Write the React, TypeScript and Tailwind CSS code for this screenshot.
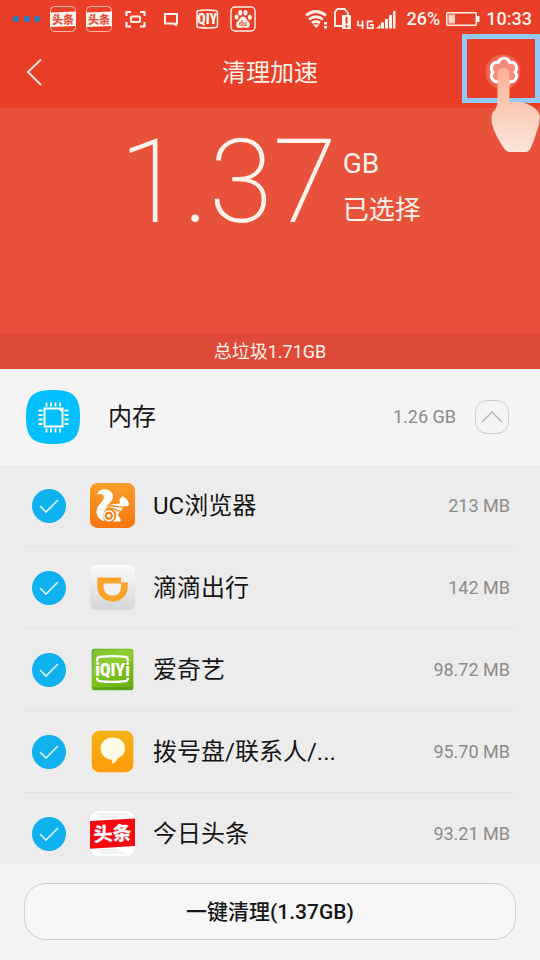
import { useState } from "react"
import type { ReactNode } from "react"

const FONT = "font-['Roboto','Noto_Sans_CJK_SC',sans-serif]"

function NewsBadge() {
  return (
    <svg className="w-[26px] h-[26px]" viewBox="0 0 26 26">
      <rect x="0.5" y="0.5" width="25" height="25" rx="4" fill="none" stroke="#ffb9a5" />
      <path d="M0 6.500l26-1v14.500l-26 1z" fill="#fff5ee" />
      <text x="13" y="17.500" textAnchor="middle" fontSize="11" fontWeight="900" fill="#e4503b">
        头条
      </text>
    </svg>
  )
}

function StatusBar() {
  return (
    <div className="flex h-[38px] items-center justify-between pl-3 pr-2 text-[#fff3ea]">
      <div className="flex items-center gap-2.5">
        <svg className="w-7 h-[26px]" viewBox="0 0 28 26" fill="#3a78b2">
          <rect x="1" y="10" width="6" height="6" rx="1.500" />
          <rect x="12" y="10" width="6" height="6" rx="1.500" />
          <rect x="22" y="10" width="6" height="6" rx="1.500" />
        </svg>
        <NewsBadge />
        <NewsBadge />
        <svg className="w-[26px] h-[26px]" viewBox="0 0 26 26" fill="none" stroke="currentColor" strokeWidth="2.200">
          <path d="M4.500 10V6H9M18 6h4.500v4M22.500 16v4.500H18M9 20.500H4.500V16" />
          <rect x="9" y="10.500" width="9" height="5.500" rx="1" />
        </svg>
        <svg className="w-[26px] h-[26px]" viewBox="0 0 26 26" fill="none" stroke="currentColor" strokeWidth="2">
          <path d="M7 8h12v9.500h-1V19l-3-1.500H7z" />
        </svg>
        <svg className="w-[26px] h-[26px]" viewBox="0 0 26 26">
          <path
            d="M3 8V6q0-1.500 2-1.500Q13 3.500 21 4.500q2.500 0 2.500 2V8M3 18v2q0 1.500 2 1.500 8 1 16 0 2.500 0 2.500-2V18M3 8v10M23.500 8v10"
            fill="none"
            stroke="currentColor"
            strokeWidth="1.500"
          />
          <text
            x="13.200"
            y="18"
            textAnchor="middle"
            fontSize="14"
            fontWeight="900"
            fill="currentColor"
            className="font-['Roboto_Condensed','Liberation_Sans_Narrow','Roboto',sans-serif]"
          >
            QIY
          </text>
        </svg>
        <svg className="w-[26px] h-[26px]" viewBox="0 0 26 26">
          <rect x="1" y="1" width="24" height="24" rx="4" fill="none" stroke="currentColor" strokeWidth="1.400" />
          <g fill="currentColor">
            <ellipse cx="6.500" cy="11" rx="2" ry="2.700" />
            <ellipse cx="10.300" cy="6.800" rx="2" ry="2.800" />
            <ellipse cx="15.500" cy="6.800" rx="2" ry="2.800" />
            <ellipse cx="19.800" cy="11.200" rx="2" ry="2.700" />
            <path d="M13 10.500c2.500 0 3.500 3 5.500 5 2.600 2.800 1.300 6.500-2 6.500-1.500 0-2-.4-3.500-.4s-2 .4-3.500.4c-3.300 0-4.600-3.700-2-6.500 2-2 3-5 5.500-5z" />
          </g>
          <text x="13" y="20" textAnchor="middle" fontSize="7" fontWeight="700" fill="#e4503b">
            du
          </text>
        </svg>
      </div>
      <div className="flex items-center gap-1.5 text-lg leading-6 font-medium">
        <svg className="mr-1 w-[92px] h-6" viewBox="0 0 92 24" fill="none" stroke="currentColor">
          <path d="M1 8.500q10-8 20 0M4 12.500q7-5.500 14 0M7 16q4-3 8 0" strokeWidth="2.800" />
          <path d="M8 17.500h6.500L11.200 21z" fill="currentColor" stroke="none" />
          <path d="M19 15h3v2.500h-3zM19 19h3v2.500h-3z" fill="currentColor" stroke="none" />
          <path d="M38 19h-8V5l2.500-3h7l3.500 4v2" strokeWidth="1.800" />
          <rect x="37" y="8" width="9" height="14" rx="1" fill="currentColor" stroke="none" />
          <path d="M41.500 10v6.500M41.500 18v2.500" stroke="#e83f29" strokeWidth="2" />
          <path d="M53 13.500v5h6M57.500 13.500v8.500M68 14.300h-5.500v6.900H68v-3.400h-3" strokeWidth="1.700" />
          <path
            d="M71 21.500l4.500-4v4zM76 15.500h3v6h-3zM80 12h3v9.500h-3zM84 8h3v13.500h-3zM88 4h2.500v17.500H88z"
            fill="currentColor"
            stroke="none"
          />
        </svg>
        <span>26%</span>
        <svg className="w-[34px] h-6" viewBox="0 0 34 24">
          <rect x="0.800" y="5.800" width="29.500" height="12.500" rx="1" fill="none" stroke="currentColor" strokeWidth="1.500" />
          <rect x="2.500" y="7.500" width="6.500" height="9" fill="#ffd5c6" />
          <rect x="31" y="9" width="2.500" height="6" fill="currentColor" />
        </svg>
        <span>10:33</span>
      </div>
    </div>
  )
}

function TapHint() {
  return (
    <div className="pointer-events-none absolute right-0 top-[34px] h-[69px] w-[78px] border-[5px] border-[#93c9f5]">
      <svg className="absolute -left-[5px] -top-[5px] h-[122px] w-[78px]" viewBox="0 0 78 122">
        <defs>
          <linearGradient id="hand" x1="0" y1="0" x2="0" y2="1">
            <stop offset="0" stopColor="#fbae92" />
            <stop offset="0.450" stopColor="#fbc9b4" />
            <stop offset="1" stopColor="#fce6dc" />
          </linearGradient>
        </defs>
        <circle cx="41" cy="38" r="17.500" fill="#fff" fillOpacity="0.200" />
        <circle cx="41" cy="38" r="13.500" fill="#fff" fillOpacity="0.250" />
        <path
          d="M35.500 40q0-6 6-6t6 6v28q13-1 22 4 7 4 8 10 1 6-3 16-2 8-5 14-2 6-6 6H48q-4 0-7-5-9-14-11-23-2-10 3-14 2-3 2.500-9z"
          fill="url(#hand)"
        />
      </svg>
    </div>
  )
}

function UcIcon() {
  return (
    <svg className="w-[45px] h-[45px]" viewBox="0 0 136 136">
      <defs>
        <linearGradient id="uc" x1="0" y1="0" x2="0" y2="1">
          <stop offset="0" stopColor="#fb9e2b" />
          <stop offset="1" stopColor="#f8760f" />
        </linearGradient>
      </defs>
      <rect width="136" height="136" rx="22" fill="url(#uc)" />
      <path
        d="M20 35C26 22 38 17 50 20c16 3 23 16 18 28-4 11-20 18-19 31-9 6-13 22-5 37C28 112 18 98 20 83c2-17 21-27 22-40 0-8-10-12-22-8z"
        fill="#fff"
      />
      <path
        d="M50 74c6-10 22-13 38-11 2 0 3-2 2-4-3-8 1-14 7-16l0-6 5 6c8 2 14 12 16 20 1 6-5 8-12 8-6 1-8 6-12 12-4 5-9 7-10 13l8 13q2 7-3 7H69c8-5 13-14 10-23-4-12-16-20-29-19z"
        fill="#fff"
      />
      <path d="M54 70c18-6 34 8 54 1M54 76c18-4 24 10 38 9" fill="none" stroke="#f88a1c" strokeWidth="4" />
      <circle cx="57" cy="99" r="17" fill="#fff" />
      <circle cx="57" cy="99" r="9" fill="none" stroke="#f87c12" strokeWidth="6" />
    </svg>
  )
}

function DidiIcon() {
  return (
    <svg className="w-[45px] h-[45px]" viewBox="0 0 136 136">
      <defs>
        <linearGradient id="didi" x1="0" y1="0" x2="0" y2="1">
          <stop offset="0" stopColor="#fbfbfb" />
          <stop offset="1" stopColor="#d6d6d6" />
        </linearGradient>
      </defs>
      <rect width="136" height="136" rx="18" fill="url(#didi)" />
      <path d="M22 38h72v15h20v13c0 27-20 45-45 45S22 93 22 66z" fill="#f9a32b" />
      <path d="M41 56h53v9c0 17-11 28-26 28S41 82 41 65z" fill="#f1f1f1" />
      <path d="M94 38h3v15h-3z" fill="#f1f1f1" />
    </svg>
  )
}

function IqiyiIcon() {
  return (
    <svg className="w-[45px] h-[45px]" viewBox="0 0 136 136">
      <defs>
        <linearGradient id="qiyi" x1="0" y1="0" x2="1" y2="1">
          <stop offset="0" stopColor="#5da52a" />
          <stop offset="0.400" stopColor="#7fc41c" />
          <stop offset="1" stopColor="#65ae14" />
        </linearGradient>
      </defs>
      <rect x="5" y="5" width="126" height="126" rx="8" fill="url(#qiyi)" />
      <path d="M8 14q0-6 6-6h108q6 0 6 6v28Q70 44 8 90z" fill="#a5dc4c" fillOpacity="0.450" />
      <path d="M8 122h120v3q0 4-5 4H13q-5 0-5-4z" fill="#4f8f12" fillOpacity="0.600" />
      <path
        d="M22 44v-7q0-6 7-7 39-5 78 0 7 1 7 7v7M22 92v4q0 6 7 7 39 5 78 0 7-1 7-7v-4"
        fill="none"
        stroke="#fff"
        strokeWidth="7"
      />
      <text
        x="68"
        y="87"
        textAnchor="middle"
        fontSize="54"
        fontWeight="900"
        fill="#fff"
        className="font-['Roboto_Condensed','Liberation_Sans_Narrow','Roboto',sans-serif]"
      >
        iQIYi
      </text>
    </svg>
  )
}

function DialerIcon() {
  return (
    <svg className="w-[45px] h-[45px]" viewBox="0 0 136 136">
      <defs>
        <linearGradient id="dial" x1="0" y1="0" x2="0" y2="1">
          <stop offset="0" stopColor="#f3b316" />
          <stop offset="1" stopColor="#fd9a08" />
        </linearGradient>
      </defs>
      <rect x="5" y="5" width="126" height="126" rx="24" fill="url(#dial)" />
      <path d="M69 26c21 0 37 14 37 33 0 14-9 24-22 30-3 5-8 11-15 17-2-4-2-9-2-13-20-1-35-15-35-34 0-19 16-33 37-33z" fill="#fffbe6" />
    </svg>
  )
}

function ToutiaoIcon() {
  return (
    <svg className="w-[45px] h-[45px]" viewBox="0 0 136 136">
      <rect width="136" height="136" rx="26" fill="#fff" />
      <path d="M22 10h90M28 18h56M24 118h60M30 126h76" stroke="#ececec" strokeWidth="5" />
      <path d="M0 30l136-7v83L0 114z" fill="#f50a12" />
      <text x="68" y="89" textAnchor="middle" fontSize="58" fontWeight="900" fill="#fff" transform="rotate(-3 68 68)">
        头条
      </text>
    </svg>
  )
}

function ChipIcon() {
  return (
    <svg className="w-[54px] h-[54px]" viewBox="0 0 54 54">
      <path d="M27 0C47 0 54 6 54 27s-7 27-27 27S0 48 0 27 7 0 27 0z" fill="#02bffd" />
      <g fill="none" stroke="#fff">
        <path d="M18.500 18.500h18v18h-18z" strokeWidth="2" />
        <path d="M32.500 18.500l4 4v-4z" fill="#fff" strokeWidth="1" />
        <path
          d="M20.500 12.500v4M25 12.500v4M29.500 12.500v4M34 12.500v4M20.500 38.500v4M25 38.500v4M29.500 38.500v4M34 38.500v4M12.500 20.500h4M12.500 25h4M12.500 29.500h4M12.500 34h4M38.500 20.500h4M38.500 25h4M38.500 29.500h4M38.500 34h4"
          strokeWidth="1.800"
        />
      </g>
    </svg>
  )
}

type AppItem = { id: string; name: string; size: string; icon: ReactNode }

const apps: AppItem[] = [
  { id: "uc", name: "UC浏览器", size: "213 MB", icon: <UcIcon /> },
  { id: "didi", name: "滴滴出行", size: "142 MB", icon: <DidiIcon /> },
  { id: "iqiyi", name: "爱奇艺", size: "98.72 MB", icon: <IqiyiIcon /> },
  { id: "dialer", name: "拨号盘/联系人/...", size: "95.70 MB", icon: <DialerIcon /> },
  { id: "toutiao", name: "今日头条", size: "93.21 MB", icon: <ToutiaoIcon /> },
]

function AppRow({ app }: { app: AppItem }) {
  return (
    <li className="h-[82px] shrink-0 border-b border-[#e4e4e4] pl-2 pr-1.5">
      <label htmlFor={`check-${app.id}`} className="flex h-full items-center">
        <span className="relative mr-6 h-[34px] w-[34px] shrink-0">
          <input
            id={`check-${app.id}`}
            type="checkbox"
            defaultChecked
            className="peer block h-[34px] w-[34px] appearance-none rounded-full border border-[#c4c4c4] checked:border-0 checked:bg-[#0fb1ee]"
          />
          <svg
            className="pointer-events-none absolute inset-0 hidden peer-checked:block"
            viewBox="0 0 34 34"
            fill="none"
            stroke="#d8f3fd"
            strokeWidth="1.700"
          >
            <path d="M8 17l6 6L26 11" />
          </svg>
        </span>
        {app.icon}
        <span className="ml-[18px] flex-1 text-2xl leading-8 text-[#161616]">{app.name}</span>
        <span className="text-lg leading-6 text-[#8b8b8b]">{app.size}</span>
      </label>
    </li>
  )
}

export default function App() {
  const [open, setOpen] = useState(true)

  return (
    <main className={`${FONT} flex h-screen flex-col overflow-hidden bg-[#f4f4f4]`}>
      <header className="relative z-10 shrink-0 bg-[#e93e28]">
        <StatusBar />
        <div className="flex h-[70px] items-center justify-between px-[18px]">
          <button type="button" aria-label="返回" className="flex h-9 w-9 items-center justify-center">
            <svg className="h-9 w-9" viewBox="0 0 36 36" fill="none" stroke="#ffe6da" strokeWidth="2">
              <path d="M23 4.500L10 17l13 13" />
            </svg>
          </button>
          <h1 className="text-2xl leading-8 text-[#fff3ea]">清理加速</h1>
          <button type="button" aria-label="设置" className="flex h-9 w-9 items-center justify-center">
            <svg className="h-9 w-9" viewBox="-18 -17 36 36" fill="none" stroke="#fff" strokeWidth="3" strokeLinejoin="round">
              <path d="M11 0A5.700 5.700 0 0 1 5.500 9.500 5.700 5.700 0 0 1-5.500 9.500 5.700 5.700 0 0 1-11 0 5.700 5.700 0 0 1-5.500-9.500 5.700 5.700 0 0 1 5.500-9.500 5.700 5.700 0 0 1 11 0z" />
            </svg>
          </button>
        </div>
        <TapHint />
      </header>

      <section className="flex h-[225px] shrink-0 items-start justify-center bg-[#e8513a] pt-4 text-[#fff3ea]">
        <span className="text-[116px] leading-[116px] font-extralight">1.37</span>
        <div className="flex flex-col pl-1.5 pt-5">
          <span className="text-[28px] leading-10">GB</span>
          <span className="pt-1.5 text-[26px] leading-10">已选择</span>
        </div>
      </section>
      <p className="h-9 shrink-0 bg-[#df4937] text-center text-lg leading-[38px] text-[#fff3ea]">总垃圾1.71GB</p>

      <section className="flex h-24 shrink-0 items-center pl-[26px] pr-[31px]">
        <ChipIcon />
        <h2 className="ml-7 flex-1 text-2xl leading-8 text-[#161616]">内存</h2>
        <span className="text-lg leading-6 text-[#8b8b8b]">1.26 GB</span>
        <button
          type="button"
          aria-label="收起"
          aria-expanded={open}
          onClick={() => setOpen(!open)}
          className="ml-[19px] flex h-[34px] w-[34px] items-center justify-center rounded-xl border border-[#cfcfcf]"
        >
          <svg className="h-5 w-5" viewBox="0 0 20 20" fill="none" stroke="#b5b5b5" strokeWidth="1.500">
            <path d={open ? "M0 15L10 5l10 10" : "M0 5l10 10L20 5"} />
          </svg>
        </button>
      </section>

      <ul className="flex min-h-0 flex-1 flex-col overflow-hidden bg-[#ececec] px-6">
        {open && apps.map((app) => <AppRow key={app.id} app={app} />)}
      </ul>

      <footer className="shrink-0 bg-[#f3f3f3] px-6 pb-5 pt-[19px]">
        <button
          type="button"
          className="h-[57px] w-full rounded-[22px] border border-[#cecece] bg-[#f6f6f6] text-[21px] leading-8 font-medium text-[#161616]"
        >
          一键清理(1.37GB)
        </button>
      </footer>
    </main>
  )
}
